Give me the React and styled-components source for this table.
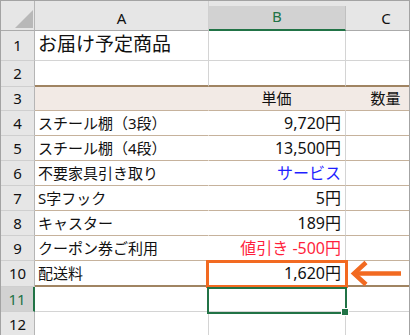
import React from "react";
import styled, { createGlobalStyle } from "styled-components";

const GlobalStyle = createGlobalStyle`
  html, body { margin: 0; padding: 0; background: #ffffff; }
  body { font-family: "Noto Sans", "Noto Sans CJK JP", sans-serif; }
`;

const GRID = "#d4d4d4";
const TAN = "#c6b29c";
const BROWN = "#a08462";
const GREEN = "#217346";
const ORANGE = "#f26a21";
const COLS = "34px 174px 137px 81px";

const Frame = styled.div`
  position: relative;
  width: 408px;
  height: 334px;
  overflow: hidden;
  border: 1px solid #a3a3a3;
  border-bottom: none;
  background: #fff;
`;

const Sheet = styled.div`
  position: relative;
  width: 426px;
`;

const HeaderRow = styled.div`
  display: grid;
  grid-template-columns: ${COLS};
  height: 30px;
  background: #e6e6e6;
`;

const Corner = styled.div`
  position: relative;
  box-sizing: border-box;
  border-right: 1px solid #b5b5b5;
  border-bottom: 1px solid #ababab;
`;

const CornerMark = styled.svg`
  position: absolute;
  left: 14px;
  top: 9px;
`;

const ColHead = styled.div`
  box-sizing: border-box;
  display: flex;
  align-items: center;
  justify-content: center;
  margin-top: ${(p) => (p.$active ? "5px" : "0")};
  padding-top: ${(p) => (p.$active ? "0" : "5px")};
  padding-bottom: ${(p) => (p.$active ? "2px" : "0")};
  background: ${(p) => (p.$active ? "#d2d2d2" : "transparent")};
  border-right: 1px solid ${(p) => (p.$active ? "#c0c0c0" : "#d0d0d0")};
  border-bottom: ${(p) => (p.$active ? `2px solid ${GREEN}` : "1px solid #ababab")};
  color: ${(p) => (p.$active ? GREEN : "#111")};
  font-size: 15px;
  line-height: 1;
`;

const Row = styled.div`
  display: grid;
  grid-template-columns: ${COLS};
  height: ${(p) => p.$h}px;
`;

const RowHead = styled.div`
  box-sizing: border-box;
  display: flex;
  align-items: center;
  justify-content: center;
  background: ${(p) => (p.$active ? "#d2d2d2" : "#e6e6e6")};
  border-right: ${(p) => (p.$active ? `2px solid ${GREEN}` : "1px solid #b5b5b5")};
  border-bottom: 1px solid #cfcfcf;
  color: ${(p) => (p.$active ? GREEN : "#111")};
  font-size: 15px;
  line-height: 1;
`;

const Cell = styled.div`
  box-sizing: border-box;
  display: flex;
  align-items: center;
  justify-content: ${(p) =>
    p.$align === "right" ? "flex-end" : p.$align === "center" ? "center" : "flex-start"};
  padding: 0 4px 0 3px;
  padding-bottom: ${(p) => (p.$lift ? "3px" : "0")};
  background: ${(p) => p.$fill || "transparent"};
  border-right: 1px solid ${(p) => (p.$noRight ? "transparent" : GRID)};
  border-bottom: ${(p) => p.$bottom || `1px solid ${GRID}`};
  color: ${(p) => p.$color || "#111"};
  font-size: ${(p) => p.$size || 15}px;
  line-height: 1;
  white-space: nowrap;
  overflow: hidden;
`;

const Selection = styled.div`
  position: absolute;
  left: 206px;
  top: 286px;
  width: 140px;
  height: 27px;
  box-sizing: border-box;
  border: 2px solid ${GREEN};
  pointer-events: none;
`;

const FillHandle = styled.div`
  position: absolute;
  right: -4px;
  bottom: -4px;
  width: 6px;
  height: 6px;
  background: ${GREEN};
  border: 1px solid #fff;
`;

const Highlight = styled.div`
  position: absolute;
  left: 205px;
  top: 259px;
  width: 142px;
  height: 28px;
  box-sizing: border-box;
  border: 3px solid ${ORANGE};
  pointer-events: none;
`;

const Arrow = styled.svg`
  position: absolute;
  left: 348px;
  top: 259px;
`;

const rows = [
  { n: 1, h: 30, a: "お届け予定商品", big: true },
  { n: 2, h: 26, bottom: `2px solid ${BROWN}` },
  { n: 3, h: 24, fill: "#f2eae5", b: "単価", c: "数量", header: true, bottom: `1px solid ${TAN}` },
  { n: 4, h: 25, a: "スチール棚（3段）", b: "9,720円", bottom: `1px solid ${TAN}` },
  { n: 5, h: 25, a: "スチール棚（4段）", b: "13,500円", bottom: `1px solid ${TAN}` },
  { n: 6, h: 25, a: "不要家具引き取り", b: "サービス", bColor: "#1f1fff", bottom: `1px solid ${TAN}` },
  { n: 7, h: 25, a: "S字フック", b: "5円", bottom: `1px solid ${TAN}` },
  { n: 8, h: 25, a: "キャスター", b: "189円", bottom: `1px solid ${TAN}` },
  { n: 9, h: 25, a: "クーポン券ご利用", b: "値引き -500円", bColor: "#ff1f3d", bottom: `1px solid ${TAN}` },
  { n: 10, h: 26, a: "配送料", b: "1,620円", bottom: `2px solid ${BROWN}` },
  { n: 11, h: 25, active: true },
  { n: 12, h: 25 },
];

export default function App() {
  return (
    <>
      <GlobalStyle />
      <Frame>
        <Sheet>
          <HeaderRow>
            <Corner>
              <CornerMark width="18" height="18" viewBox="0 0 18 18">
                <polygon points="18,0 18,18 0,18" fill="#b8b8b8" />
              </CornerMark>
            </Corner>
            <ColHead>A</ColHead>
            <ColHead $active>B</ColHead>
            <ColHead>C</ColHead>
          </HeaderRow>
          {rows.map((r) => {
            const banded = r.n >= 3 && r.n <= 10;
            return (
              <Row key={r.n} $h={r.h}>
                <RowHead $active={r.active}>{r.n}</RowHead>
                <Cell
                  $size={r.big ? 19 : 15}
                  $lift={r.big}
                  $fill={r.fill}
                  $bottom={r.bottom}
                  $noRight={banded}
                >
                  {r.a}
                </Cell>
                <Cell
                  $align={r.header ? "center" : "right"}
                  $size={r.header ? 15 : 16}
                  $fill={r.fill}
                  $bottom={r.bottom}
                  $color={r.bColor}
                  $noRight={r.n === 3}
                >
                  {r.b}
                </Cell>
                <Cell $align="center" $fill={r.fill} $bottom={r.bottom}>
                  {r.c}
                </Cell>
              </Row>
            );
          })}
          <Highlight />
          <Selection>
            <FillHandle />
          </Selection>
          <Arrow width="54" height="28" viewBox="0 0 54 28">
            <line x1="5" y1="13.5" x2="52" y2="13.5" stroke={ORANGE} strokeWidth="4.5" />
            <polyline
              points="17,2.5 5,13.5 17,24.5"
              fill="none"
              stroke={ORANGE}
              strokeWidth="4.5"
              strokeLinejoin="miter"
            />
          </Arrow>
        </Sheet>
      </Frame>
    </>
  );
}
